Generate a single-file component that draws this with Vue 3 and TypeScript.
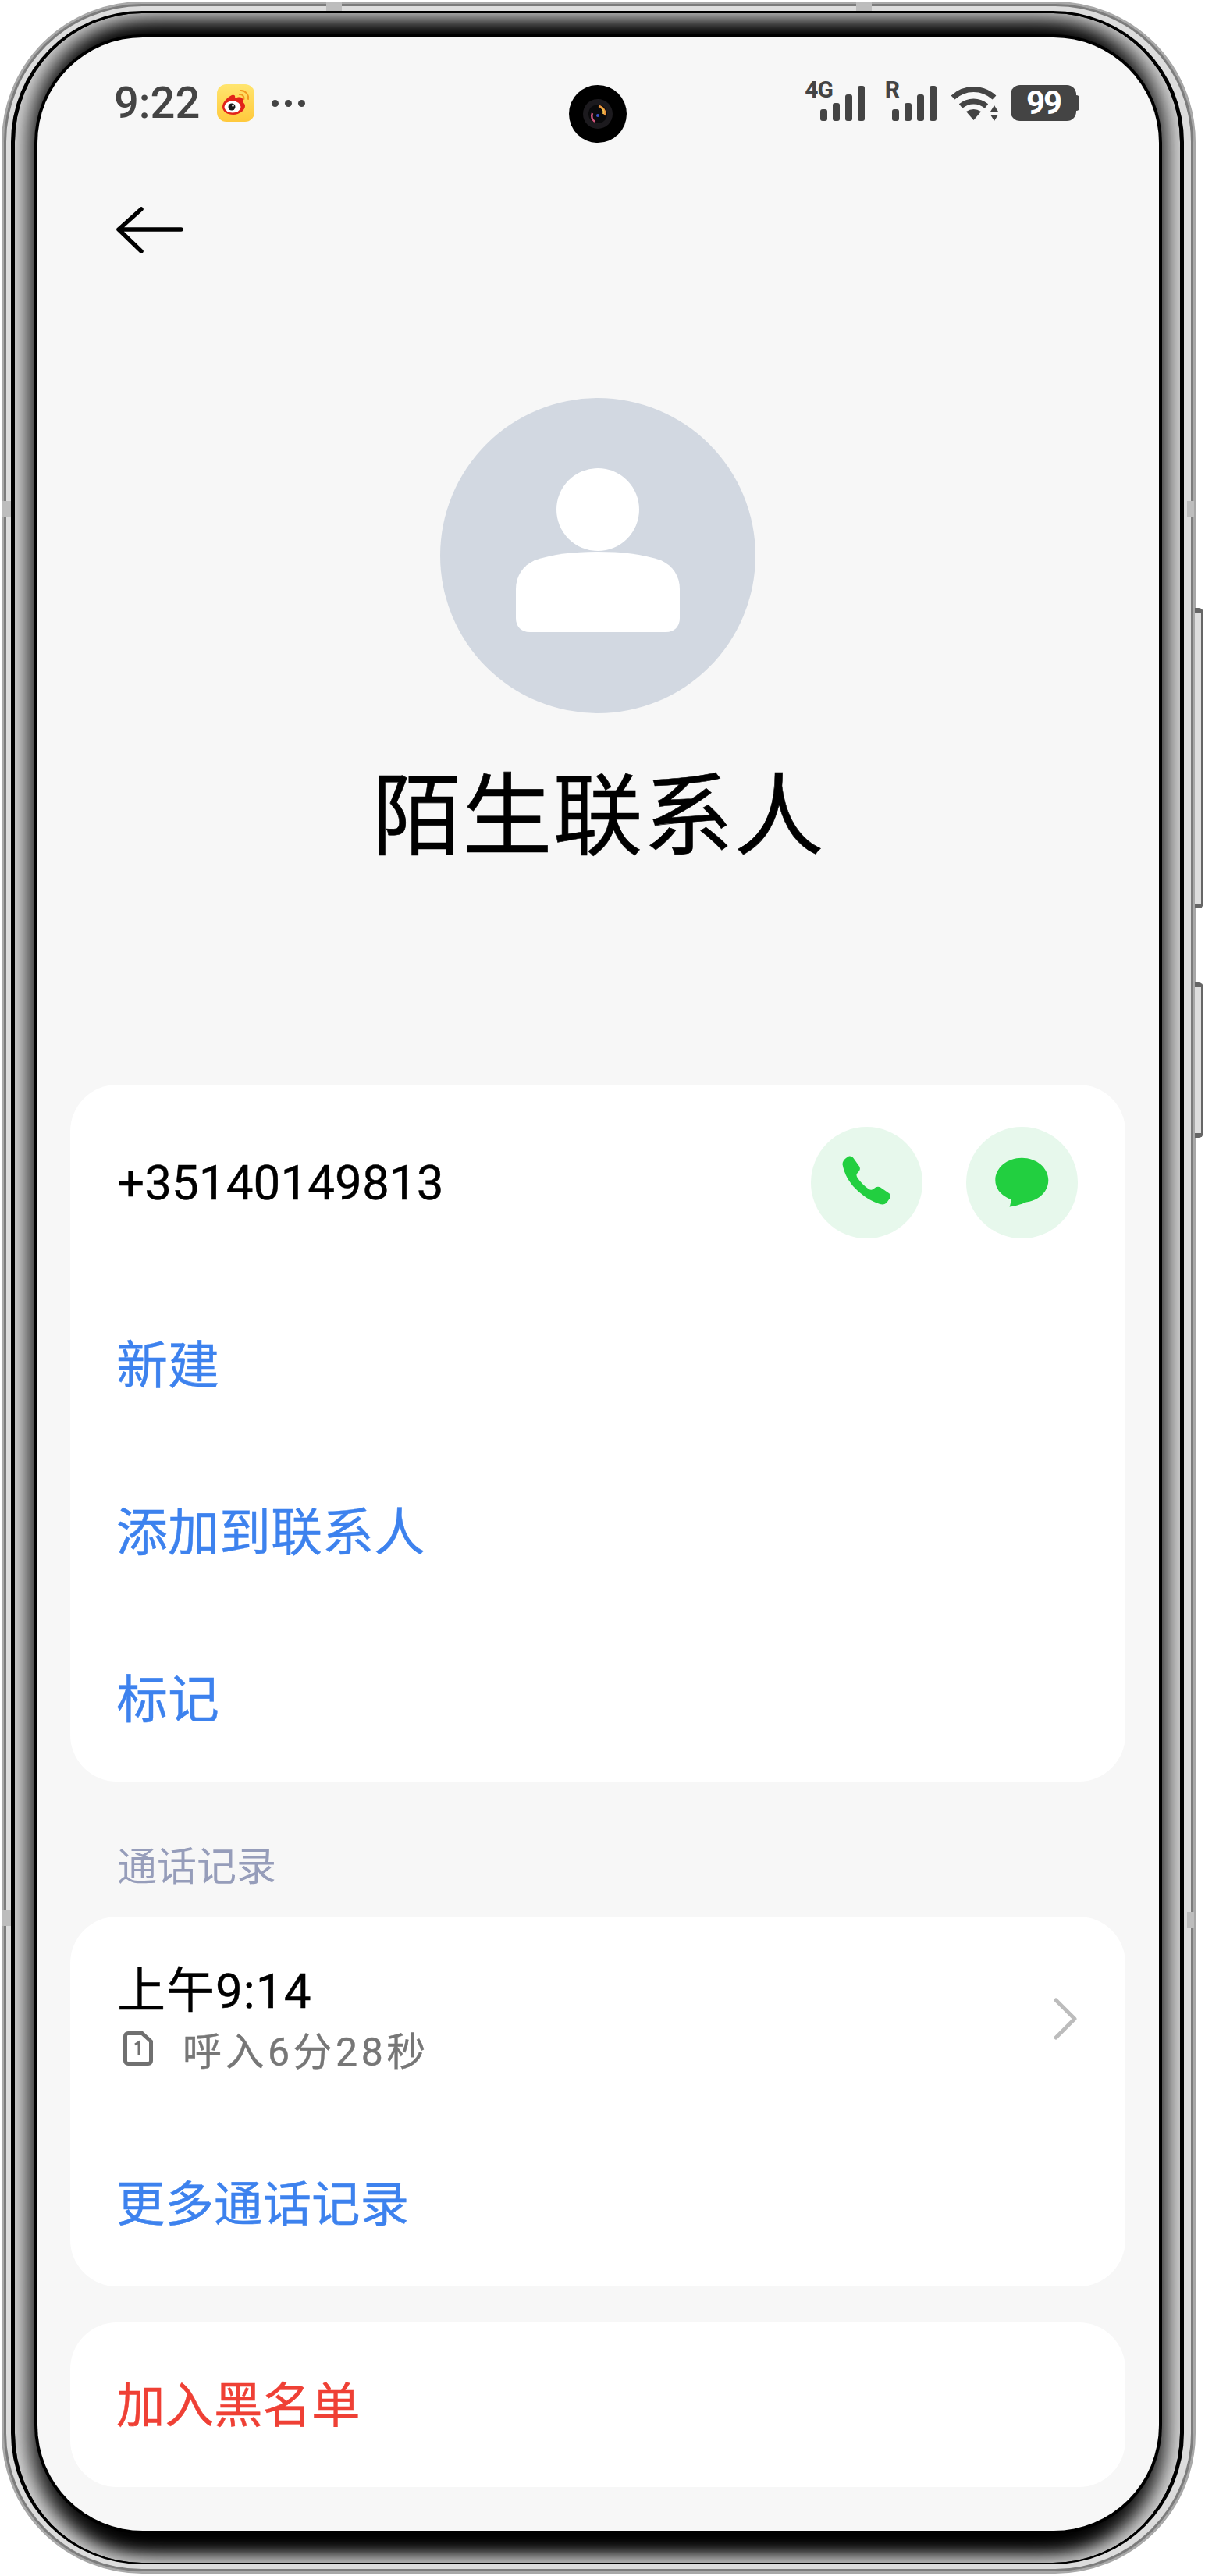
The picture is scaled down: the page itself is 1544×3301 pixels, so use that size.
<script setup lang="ts">
interface Signal {
  label: string;
  bars: number[];
}

const signals: Signal[] = [
  { label: '4G', bars: [15, 23, 34, 45] },
  { label: 'R', bars: [15, 23, 34, 45] },
];
</script>

<template>
  <div class="page">
    <div class="metal">
      <i class="band band-top-a"></i>
      <i class="band band-top-b"></i>
      <i class="band band-left-a"></i>
      <i class="band band-left-b"></i>
      <i class="band band-right-a"></i>
      <i class="band band-right-b"></i>
      <i class="side-key key-power"></i>
      <i class="side-key key-volume"></i>
      <div class="bezel">
        <div class="screen">
          <div class="camera">
            <svg viewBox="0 0 74 74" width="74" height="74">
              <circle cx="37" cy="37" r="37" fill="#000" />
              <circle cx="37" cy="37" r="19" fill="#1c1a1e" />
              <circle cx="37" cy="37" r="12" fill="#0a0a0c" />
              <path d="M38 27a10 10 0 0 1 8 12" fill="none" stroke="#e8913a" stroke-width="2.5" />
              <path d="M41 29a7 7 0 0 1 3 8" fill="none" stroke="#f4c04e" stroke-width="2" />
              <path d="M30 36a9 9 0 0 0 3 11" fill="none" stroke="#d0557c" stroke-width="2.5" />
              <circle cx="37" cy="39" r="2" fill="#3c54c8" />
            </svg>
          </div>

          <div class="status">
            <div class="status-left">
              <span class="clock">9:22</span>
              <svg class="weibo" viewBox="0 0 48 48" width="48" height="48">
                <defs>
                  <linearGradient id="wb" x1="0" y1="0" x2="0" y2="1">
                    <stop offset="0" stop-color="#ffe56f" />
                    <stop offset="1" stop-color="#ffc93c" />
                  </linearGradient>
                </defs>
                <rect width="48" height="48" rx="12" fill="url(#wb)" />
                <path d="M7 29c0-6 6-12 12-15 3-1 5 0 4 4 5-2 9-2 10 1 1 2 0 3 0 4 2 1 3 3 3 5 0 5-7 11-15 11C13 39 7 35 7 29z" fill="#e2231a" />
                <ellipse cx="20" cy="29" rx="10.5" ry="7.5" fill="#fff" />
                <circle cx="19" cy="29" r="4.5" fill="#1a1a1a" />
                <circle cx="20.5" cy="27.5" r="1.2" fill="#fff" />
                <path d="M29 13c3-.5 6 2 5.500 6" fill="none" stroke="#f39a1e" stroke-width="2" stroke-linecap="round" />
                <path d="M30 8c6-.5 11 5 10 11" fill="none" stroke="#f39a1e" stroke-width="2" stroke-linecap="round" />
              </svg>
              <span class="dots"><i></i><i></i><i></i></span>
            </div>
            <div class="status-right">
              <div v-for="s in signals" :key="s.label" class="signal">
                <span class="signal-label">{{ s.label }}</span>
                <i v-for="(h, n) in s.bars" :key="n" :style="{ height: h + 'px' }"></i>
              </div>
              <svg class="wifi" viewBox="0 0 63 45" width="63" height="45">
                <path d="M4 15C19 1 42 1 57 15" fill="none" stroke="#444" stroke-width="7" />
                <path d="M14 26C24 18 37 18 47 26" fill="none" stroke="#444" stroke-width="7" />
                <path d="M21 33Q30.500 27 40 33L30.500 44Z" fill="#444" />
                <path d="M57 25L62 33H52Z M57 45L62 37H52Z" fill="#444" />
              </svg>
              <div class="battery"><span>99</span></div>
            </div>
          </div>

          <div class="topbar">
            <svg viewBox="0 0 88 60" width="88" height="60">
              <path d="M33 4L4 30L33 58M4 30H84" fill="none" stroke="#000" stroke-width="5.500" stroke-linecap="round" stroke-linejoin="round" />
            </svg>
          </div>

          <div class="hero">
            <div class="avatar">
              <svg viewBox="0 0 210 210" width="210" height="210">
                <circle cx="105" cy="53" r="53" fill="#fff" />
                <path d="M0 155C0 138 9 125 24 118C48 110 75 107 105 107C135 107 162 110 186 118C201 125 210 138 210 155V192C210 203 203 210 192 210H18C7 210 0 203 0 192Z" fill="#fff" />
              </svg>
            </div>
            <h1 class="name">陌生联系人</h1>
          </div>

          <section class="card">
            <div class="row-phone">
              <span class="number">+35140149813</span>
              <div class="actions">
                <button class="action">
                  <svg viewBox="0 0 143 143" width="143" height="143">
                    <path d="M40.500 48C40.500 45 42 42 45 40L48 38C50.500 37 53 38 54.500 40L62 50.500C63.500 53 63 55 61.500 57L59 60C58 61.500 58.500 63 59.500 65C63 70.500 68.500 76 74.500 80C76.500 81 78 81 79.500 80L83 77.500C85 76.500 87 76.500 89 77.500L100 85C102 86.500 102.500 89 101.500 91L98 96C95.500 99.500 92 100 88.500 99C77 95.500 66 88 57 79C49 71 43 61 40.500 48Z" fill="#22cf40" />
                  </svg>
                </button>
                <button class="action">
                  <svg viewBox="0 0 143 143" width="143" height="143">
                    <path d="M71.300 39.800C52.500 39.800 37.300 52.500 37.300 68.300C37.300 79 44 87.500 57 93C57.500 96.500 56.500 100 55.500 102.500C61 102 70 99.500 77 96.500C93 94.500 105.300 83 105.300 68.300C105.300 52.500 90 39.800 71.300 39.800Z" fill="#22cf40" />
                  </svg>
                </button>
              </div>
            </div>
            <div class="row link large">新建</div>
            <div class="row link large">添加到联系人</div>
            <div class="row link large">标记</div>
          </section>

          <div class="section-title">通话记录</div>

          <section class="card">
            <div class="row-call">
              <div>
                <div class="call-time">上午9:14</div>
                <div class="call-info">
                  <svg viewBox="0 0 38 44" width="38" height="44">
                    <path d="M6 2.500H24L35.500 13V38C35.500 40 34 41.500 32 41.500H6C4 41.500 2.500 40 2.500 38V6C2.500 4 4 2.500 6 2.500Z" fill="none" stroke="#707070" stroke-width="5" />
                    <path d="M15 17L20 14V31" fill="none" stroke="#707070" stroke-width="3" />
                  </svg>
                  <span>呼入6分28秒</span>
                </div>
              </div>
              <svg viewBox="0 0 30 54" width="30" height="54">
                <path d="M3 3L27 27L3 51" fill="none" stroke="#bcbcbc" stroke-width="5" stroke-linecap="round" stroke-linejoin="round" />
              </svg>
            </div>
            <div class="row link more">更多通话记录</div>
          </section>

          <section class="card block-card">
            <div class="row danger">加入黑名单</div>
          </section>
        </div>
      </div>
    </div>
  </div>
</template>

<style scoped>
.page {
  width: 1544px;
  height: 3301px;
  padding: 2px 0 0 2px;
  box-sizing: border-box;
  background: #fff;
  font-family: Roboto, "Noto Sans CJK SC", sans-serif;
  overflow: hidden;
}

.metal {
  position: relative;
  width: 1530px;
  height: 3296px;
  box-sizing: border-box;
  padding: 10px 13px 10px 10px;
  border: 2px solid #a8a8a8;
  border-radius: 180px;
  background: #dcdcdc;
  box-shadow: inset 0 0 0 1px #aaa, inset 0 0 0 4px #7c7c7c;
}

.band {
  position: absolute;
  background: #bdbdbd;
}
.band-top-a {
  top: -2px;
  left: 414px;
  width: 20px;
  height: 12px;
}
.band-top-b {
  top: -2px;
  left: 1093px;
  width: 20px;
  height: 12px;
}
.band-left-a,
.band-left-b {
  left: -2px;
  width: 12px;
  height: 20px;
}
.band-left-a {
  top: 638px;
}
.band-left-b {
  top: 2444px;
}
.band-right-a,
.band-right-b {
  right: 0;
  width: 9px;
  height: 20px;
}
.band-right-a {
  top: 638px;
}
.band-right-b {
  top: 2446px;
}

.side-key {
  position: absolute;
  right: -12px;
  width: 11px;
  box-sizing: border-box;
  background: #dedede;
  border-style: solid;
  border-color: #666;
  border-width: 6px 3px 6px 0;
  border-radius: 0 6px 6px 0;
}
.key-power {
  top: 775px;
  height: 385px;
}
.key-volume {
  top: 1255px;
  height: 199px;
}

.bezel {
  box-sizing: border-box;
  width: 100%;
  height: 100%;
  padding: 31px 27px 41px 29px;
  border-style: solid;
  border-color: #000;
  border-width: 3px 5px 2px;
  border-radius: 168px;
  background: #000;
  box-shadow: inset 20px 0 30px #d4d4d4, inset -20px 0 30px #d4d4d4, inset 0 -8px 16px #444;
}

.screen {
  position: relative;
  width: 1437px;
  height: 3195px;
  border-radius: 135px;
  background: #f7f7f7;
  box-shadow: 0 0 0 4px #000;
  overflow: hidden;
}

.camera {
  position: absolute;
  top: 61px;
  left: 681px;
  width: 74px;
  height: 74px;
}

.status {
  display: flex;
  justify-content: space-between;
  align-items: center;
  height: 48px;
  padding: 60px 106px 0 98px;
  color: #444;
}
.status-left {
  display: flex;
  align-items: center;
}
.clock {
  font-size: 56px;
  font-weight: 500;
  line-height: 48px;
}
.weibo {
  margin-left: 22px;
}
.dots {
  display: flex;
  gap: 8px;
  margin-left: 22px;
}
.dots i {
  width: 9px;
  height: 9px;
  border-radius: 50%;
  background: #444;
}
.status-right {
  display: flex;
  align-items: flex-end;
  height: 46px;
}
.signal {
  position: relative;
  display: flex;
  align-items: flex-end;
  gap: 7px;
  margin-right: 35px;
}
.signal + .signal {
  margin-right: 17px;
}
.signal i {
  width: 9px;
  border-radius: 3px;
  background: #444;
}
.signal-label {
  position: absolute;
  top: -10px;
  right: 41px;
  font-size: 30px;
  font-weight: 700;
  line-height: 30px;
  letter-spacing: -1px;
}
.signal + .signal .signal-label {
  right: 48px;
}
.battery {
  position: relative;
  width: 84px;
  height: 46px;
  margin-left: 15px;
  border-radius: 12px;
  background: #444;
  color: #fff;
  font-size: 42px;
  font-weight: 700;
  line-height: 46px;
  letter-spacing: -2px;
  text-align: center;
}
.battery::after {
  content: "";
  position: absolute;
  top: 13px;
  right: -4px;
  width: 4px;
  height: 20px;
  border-radius: 0 4px 4px 0;
  background: #444;
}

.topbar {
  height: 60px;
  padding: 108px 0 0 100px;
}
.topbar svg {
  display: block;
}

.hero {
  display: flex;
  flex-direction: column;
  align-items: center;
  padding-top: 186px;
}
.avatar {
  display: flex;
  justify-content: center;
  padding-top: 90px;
  box-sizing: border-box;
  width: 404px;
  height: 404px;
  border-radius: 50%;
  background: #d2d8e1;
  margin-right: 2px;
}
.avatar svg {
  display: block;
}
.name {
  margin: 68px 0 0;
  color: #000;
  font-size: 115px;
  font-weight: 400;
  line-height: 130px;
  letter-spacing: 1px;
  -webkit-text-stroke: 0.6px #000;
}

.card {
  margin: 278px 43px 0 42px;
  border-radius: 60px;
  background: #fff;
  -webkit-text-stroke: 0.4px currentColor;
}
.section-title + .card {
  margin-top: 0;
}
.block-card {
  margin-top: 46px;
}

.row-phone {
  display: flex;
  justify-content: space-between;
  align-items: center;
  height: 251px;
  padding: 0 61px 0 60px;
}
.number {
  color: #000;
  font-size: 62px;
}
.actions {
  display: flex;
  gap: 56px;
}
.action {
  display: block;
  width: 143px;
  height: 143px;
  padding: 0;
  border: 0;
  border-radius: 50%;
  background: #e7f8ec;
}
.action svg {
  display: block;
}

.row {
  display: flex;
  align-items: center;
  box-sizing: border-box;
  height: 214px;
  padding: 0 0 9px 59px;
  font-size: 62.500px;
}
.link {
  color: #3d82ee;
}
.link.large {
  font-size: 66px;
}
.link.more {
  height: 212px;
}
.danger {
  height: 211px;
  color: #ef4035;
}

.section-title {
  box-sizing: border-box;
  height: 173px;
  padding: 45px 0 0 102px;
  color: #969dba;
  font-size: 51px;
  line-height: 130px;
}

.row-call {
  display: flex;
  justify-content: space-between;
  align-items: center;
  height: 262px;
  padding: 0 62px 0 60px;
}
.call-time {
  box-sizing: border-box;
  height: 76px;
  padding-top: 3px;
  color: #000;
  font-size: 62px;
  line-height: 76px;
  letter-spacing: 1px;
}
.call-info {
  display: flex;
  align-items: center;
  height: 76px;
  padding-left: 8px;
  color: #777;
  font-size: 50px;
  letter-spacing: 4.500px;
}
.call-info span {
  margin-left: 38px;
}
</style>

<style>
html,
body {
  margin: 0;
  background: #fff;
}
</style>
